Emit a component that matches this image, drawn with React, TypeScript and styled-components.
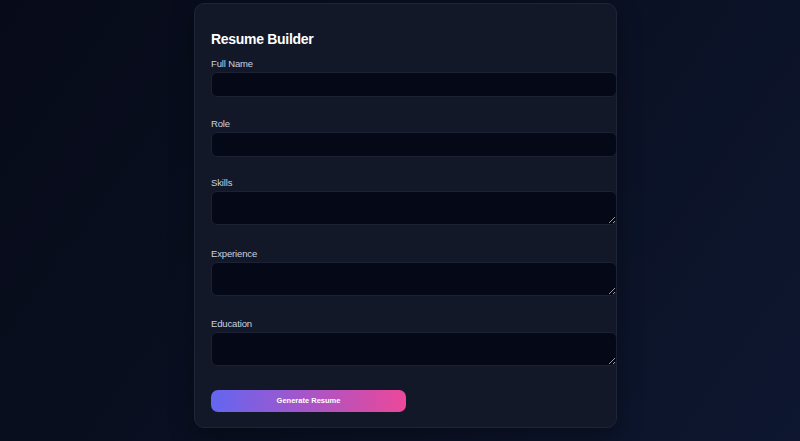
import * as React from 'react';
import styled, { createGlobalStyle } from 'styled-components';

const GlobalStyle = createGlobalStyle`
  html, body {
    margin: 0;
    padding: 0;
  }

  body {
    background: linear-gradient(125deg, #070b19 0%, #0a1022 50%, #0e1730 100%);
    font-family: 'Liberation Sans', Arial, sans-serif;
    height: 441px;
    overflow: hidden;
  }
`;

const Page = styled.main`
  display: flex;
  padding: 3px 0 0 194px;
`;

const Card = styled.form`
  background-color: #121828;
  border: 1px solid #1e2536;
  border-radius: 10px;
  box-shadow: 0 8px 24px rgba(0, 0, 0, 0.35);
  box-sizing: border-box;
  display: flex;
  flex-direction: column;
  padding: 26px 16px 15px 16px;
  width: 423px;
`;

const Title = styled.h2`
  color: #ffffff;
  font-size: 14px;
  font-weight: 700;
  letter-spacing: -0.3px;
  line-height: 19px;
  margin: 0 0 8px 0;
`;

const Field = styled.div<{ $gap: number }>`
  display: flex;
  flex-direction: column;
  margin-bottom: ${({ $gap }) => $gap}px;
`;

const Label = styled.label`
  color: #cbd2e0;
  font-size: 9.5px;
  letter-spacing: -0.15px;
  line-height: 13px;
  margin-bottom: 2px;
`;

const Input = styled.input`
  background-color: #050816;
  border: 1px solid #1c2234;
  border-radius: 6px;
  box-sizing: border-box;
  color: #e2e8f0;
  height: 25px;
  outline: none;
  width: 406px;
`;

const TextArea = styled.textarea`
  background-color: #050816;
  border: 1px solid #1c2234;
  border-radius: 6px;
  box-sizing: border-box;
  color: #e2e8f0;
  height: 34px;
  outline: none;
  resize: vertical;
  width: 406px;
`;

const Button = styled.button`
  background: linear-gradient(90deg, #6366f1 0%, #a855c7 50%, #ec4899 100%);
  border: none;
  border-radius: 7px;
  color: #ffffff;
  cursor: pointer;
  font-family: 'Liberation Sans', Arial, sans-serif;
  font-size: 7.5px;
  font-weight: 700;
  height: 22px;
  margin-top: 2px;
  width: 195px;
`;

const fields = [
  { label: 'Full Name', multiline: false },
  { label: 'Role', multiline: false },
  { label: 'Skills', multiline: true },
  { label: 'Experience', multiline: true },
  { label: 'Education', multiline: true },
];

export default function App(): JSX.Element {
  return (
    <>
      <GlobalStyle />
      <Page>
        <Card onSubmit={(e) => e.preventDefault()}>
          <Title>Resume Builder</Title>
          {fields.map((f) => (
            <Field key={f.label} $gap={f.multiline ? 21.5 : 19.5}>
              <Label>{f.label}</Label>
              {f.multiline ? <TextArea /> : <Input />}
            </Field>
          ))}
          <Button type="submit">Generate Resume</Button>
        </Card>
      </Page>
    </>
  );
}
